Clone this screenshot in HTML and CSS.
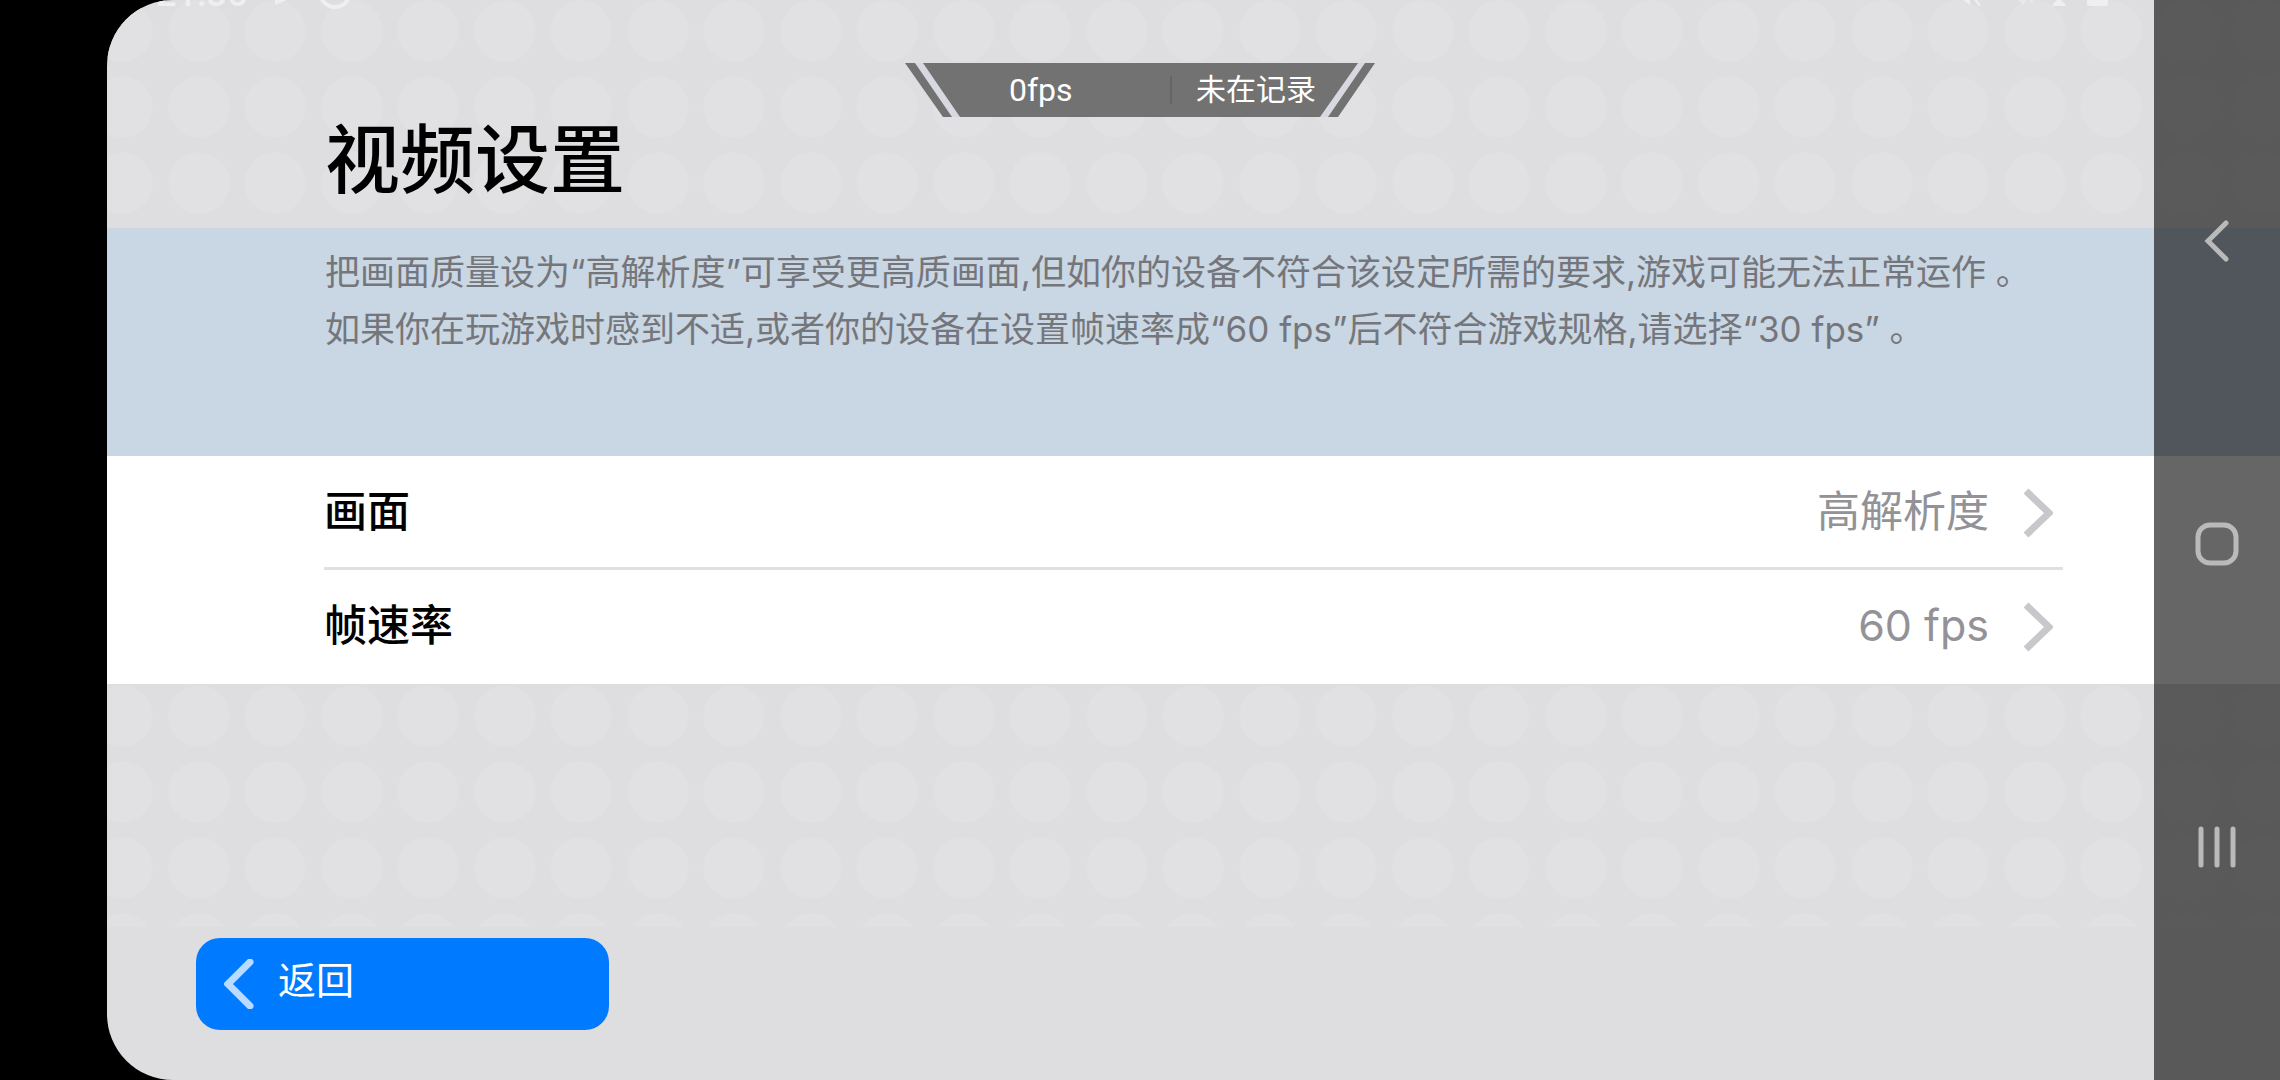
FILE: index.html
```
<!DOCTYPE html>
<html lang="zh-CN">
<head>
  <meta charset="UTF-8">
  <title>视频设置</title>
  <meta name="viewport" content="width=device-width, initial-scale=1">
  <link rel="stylesheet" href="styles.css">
</head>
<body>
  <div class="screen">
    <header class="header dots">
      <h1>视频设置</h1>
    </header>

    <div class="notice">
      <p>把画面质量设为“高解析度”可享受更高质画面,但如你的设备不符合该设定所需的要求,游戏可能无法正常运作 。</p>
      <p>如果你在玩游戏时感到不适,或者你的设备在设置帧速率成“60 fps”后不符合游戏规格,请选择“30 fps” 。</p>
    </div>

    <div class="settings">
      <button class="row">
        <span class="name">画面</span>
        <span class="value">高解析度</span>
        <svg class="chevron" viewBox="0 0 30 50"><path d="M3 3 L26 25 L3 47"/></svg>
      </button>
      <button class="row">
        <span class="name">帧速率</span>
        <span class="value">60 fps</span>
        <svg class="chevron" viewBox="0 0 30 50"><path d="M3 3 L26 25 L3 47"/></svg>
      </button>
    </div>

    <div class="filler dots"></div>

    <footer class="footer">
      <button class="back">
        <svg viewBox="0 0 30 50"><path d="M26 3 L4 25 L26 47"/></svg>
        <span>返回</span>
      </button>
    </footer>

    <div class="status">
      <span class="time">21:36</span>
      <svg class="status-left" viewBox="0 0 90 12"><path class="fill" d="M2 0 H14 L4 4 Q2 5 2 3Z"/><circle cx="62" cy="-8" r="15"/></svg>
      <svg class="status-right" viewBox="0 0 150 12"><path class="fill" d="M0 0 H7 V5Z M11 0 H14 L18 5 L16 6Z M89 5 L94 0 H98 L103 5 Q102 6 101 6 H91 Q90 6 89 5Z M124 0 H145 V4 Q145 6 143 6 H126 Q124 6 124 4Z"/><path class="dim" d="M55 0 H64 L60 5Z M67 0 H70 V2 H67Z"/></svg>
    </div>

    <div class="monitor">
      <svg viewBox="0 0 470 54" preserveAspectRatio="none">
        <path class="gap" d="M0 0 H470 L433 54 H38Z"/>
        <path d="M0 0 H10 L47 54 H38Z M18 0 H453 L415 54 H55Z M460 0 H470 L433 54 H423Z"/>
      </svg>
      <span class="fps">0fps</span>
      <span class="record">未在记录</span>
    </div>
  </div>

  <nav class="navbar">
    <button aria-label="返回"><svg viewBox="0 0 48 48"><path d="M33 6 L15 24 L33 42"/></svg></button>
    <button aria-label="主页"><svg viewBox="0 0 48 48"><rect x="5" y="5" width="38" height="38" rx="12"/></svg></button>
    <button aria-label="最近"><svg viewBox="0 0 48 48"><path d="M8 6 V42 M24 6 V42 M40 6 V42"/></svg></button>
  </nav>
</body>
</html>
```
FILE: styles.css
```
* { box-sizing: border-box; margin: 0; padding: 0; }
body {
  font-family: Inter, 'Noto Sans CJK SC', sans-serif;
  background: #000;
  min-height: 100vh;
  position: relative;
  overflow: hidden;
}
button {
  border: none;
  background: none;
  font: inherit;
  color: inherit;
  cursor: pointer;
}
svg {
  display: block;
  fill: none;
}
.screen {
  position: relative;
  display: flex;
  flex-direction: column;
  min-height: 100vh;
  margin-left: 107px;
  background: #dedee0;
  border-radius: 66px 0 0 66px;
  overflow: hidden;
}

/* two dots per tile */
.dots {
  background-image:
    radial-gradient(circle at 15px 31px, #e1e1e3 30px, transparent 31px),
    radial-gradient(circle at 92px 31px, #e1e1e3 30px, transparent 31px),
    radial-gradient(circle at 168px 31px, #e1e1e3 30px, transparent 31px);
  background-size: 153px 76px;
}
.header {
  height: 228px;
  padding: 104px 218px 0;
}
h1 {
  font-size: 75px;
  line-height: 112px;
  font-weight: 500;
  color: #000;
}

.notice {
  height: 228px;
  padding: 16px 218px 0;
  background: #c9d6e3;
  color: #75767b;
  font-size: 35px;
  line-height: 57px;
  white-space: nowrap;
}

.settings { background: #fff; }
.row {
  display: flex;
  align-items: center;
  width: calc(100% - 434px);
  height: 114px;
  margin-left: 217px;
  padding-right: 10px;
  font-size: 43px;
  line-height: 60px;
  text-align: left;
}
.row:first-child {
  box-shadow: inset 0 -3px #e0e0e1;
}
.name, .value { padding-bottom: 4px; }
.name {
  flex: 1;
  font-weight: 500;
  color: #000;
}
.value { color: #929297; }
.chevron {
  width: 30px;
  height: 50px;
  margin-left: 34px;
  stroke: #c7c7cc;
  stroke-width: 7;
}

.filler {
  flex: 1;
  background-position: 0 1px;
}
.footer {
  height: 153px;
  padding: 11px 89px;
}
.back {
  display: flex;
  align-items: center;
  gap: 24px;
  width: 413px;
  height: 92px;
  padding-left: 28px;
  border-radius: 24px;
  background: #007aff;
  color: #fff;
  font-size: 38px;
  line-height: 56px;
}
.back span { padding-bottom: 8px; }
.back svg {
  width: 30px;
  height: 50px;
  stroke: #b8dbff;
  stroke-width: 7;
  stroke-linecap: round;
}

.status {
  position: absolute;
  top: 0;
  left: 49px;
  right: 167px;
  height: 12px;
  display: flex;
  color: #efeff0;
  font-family: Roboto, sans-serif;
}
.status svg { height: 12px; }
.status .fill { fill: #efeff0; }
.status .dim { fill: #e8e8ea; }
.time {
  width: 117px;
  margin-top: -6px;
  font-size: 36px;
  font-weight: 500;
  line-height: 0;
}
.status-left {
  width: 90px;
  stroke: #efeff0;
  stroke-width: 4;
}
.status-left .fill { stroke: none; }
.status-right {
  width: 150px;
  margin-left: auto;
}

.monitor {
  position: absolute;
  top: 63px;
  left: 798px;
  width: 470px;
  height: 54px;
  display: flex;
  align-items: center;
  color: #fff;
  font-family: Roboto, 'Noto Sans CJK SC', sans-serif;
  font-size: 30px;
}
.monitor svg {
  position: absolute;
  width: 100%;
  height: 100%;
  fill: #727272;
}
.monitor .gap { fill: #d8d9e0; }
.monitor span { position: relative; }
.fps {
  width: 265px;
  padding-left: 104px;
  font-size: 32px;
}
.record {
  padding-left: 24px;
  border-left: 2px solid #656565;
  line-height: 28px;
}

.navbar {
  position: absolute;
  top: 0;
  right: 0;
  bottom: 0;
  width: 126px;
  padding: 90px 0 82px;
  display: flex;
  flex-direction: column;
  justify-content: space-around;
  align-items: center;
  background: rgba(0,0,0,0.6);
}
.navbar svg {
  width: 48px;
  height: 48px;
  stroke: #bababa;
  stroke-width: 5;
  stroke-linecap: round;
}
```
